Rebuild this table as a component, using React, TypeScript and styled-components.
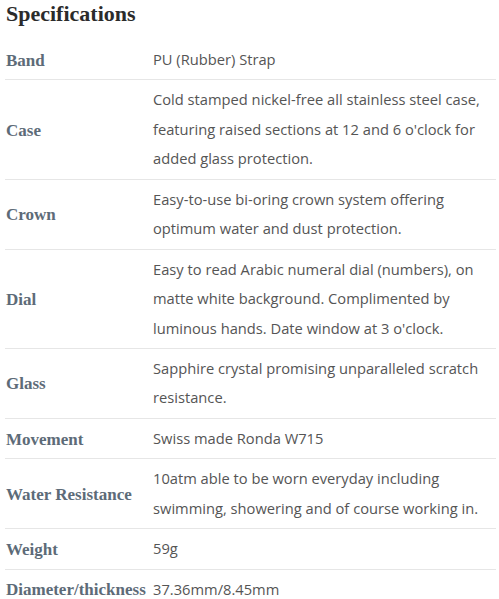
import React from "react";
import styled, { createGlobalStyle } from "styled-components";

const Global = createGlobalStyle`
  html, body { margin: 0; padding: 0; background: #ffffff; }
  body { font-family: "Open Sans", sans-serif; }
`;

const Wrapper = styled.div`
  padding: 0 3px 0 5px;
`;

const Title = styled.h2`
  margin: 0;
  padding: 1px 0 0 1px;
  height: 39px;
  font-family: "Liberation Serif", serif;
  font-weight: 700;
  font-size: 22px;
  line-height: 26px;
  color: #2b2b2b;
`;

const Table = styled.table`
  width: 100%;
  border-collapse: collapse;
`;

const Row = styled.tr`
  border-bottom: 1px solid #e6e6e6;
`;

const Label = styled.th`
  text-align: left;
  vertical-align: middle;
  width: 144px;
  padding: 6px 2px 4px 1px;
  font-family: "Liberation Serif", serif;
  font-weight: 700;
  font-size: 17px;
  color: #5d6b78;
  white-space: nowrap;
`;

const Value = styled.td`
  padding: 5px 4px 5px 1px;
  font-family: "Open Sans", sans-serif;
  font-size: 14.7px;
  line-height: 29.43px;
  color: #555555;
`;

const specs: [string, string][] = [
  ["Band", "PU (Rubber) Strap"],
  [
    "Case",
    "Cold stamped nickel-free all stainless steel case, featuring raised sections at 12 and 6 o'clock for added glass protection.",
  ],
  ["Crown", "Easy-to-use bi-oring crown system offering optimum water and dust protection."],
  [
    "Dial",
    "Easy to read Arabic numeral dial (numbers), on matte white background. Complimented by luminous hands. Date window at 3 o'clock.",
  ],
  ["Glass", "Sapphire crystal promising unparalleled scratch resistance."],
  ["Movement", "Swiss made Ronda W715"],
  ["Water Resistance", "10atm able to be worn everyday including swimming, showering and of course working in."],
  ["Weight", "59g"],
  ["Diameter/thickness", "37.36mm/8.45mm"],
];

export default function App() {
  return (
    <>
      <Global />
      <Wrapper>
        <Title>Specifications</Title>
        <Table>
          <tbody>
            {specs.map(([k, v]) => (
              <Row key={k}>
                <Label>{k}</Label>
                <Value>{v}</Value>
              </Row>
            ))}
          </tbody>
        </Table>
      </Wrapper>
    </>
  );
}
